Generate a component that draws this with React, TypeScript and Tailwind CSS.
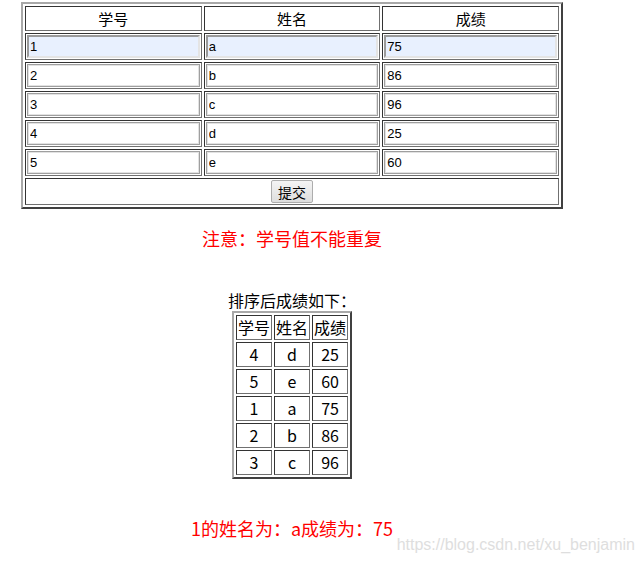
import React from "react";

const rows = [
  ["1", "a", "75"],
  ["2", "b", "86"],
  ["3", "c", "96"],
  ["4", "d", "25"],
  ["5", "e", "60"],
];

const sorted = [
  ["4", "d", "25"],
  ["5", "e", "60"],
  ["1", "a", "75"],
  ["2", "b", "86"],
  ["3", "c", "96"],
];

const cellCls =
  "border border-t-[#333333] border-l-[#333333] border-b-[#707070] border-r-[#707070] p-[1px] align-middle";

export default function App() {
  return (
    <div className="relative w-[644px] h-[564px] bg-white overflow-hidden font-['Noto_Sans_CJK_SC',sans-serif] text-black">
      <div className="ml-[21px] mt-[2px] w-[542px] flex flex-col items-center">
        <table className="table-fixed w-[542px] border-separate border-spacing-[2px] border-2 border-t-[#a8a8a8] border-l-[#a8a8a8] border-b-[#404040] border-r-[#404040]">
          <tbody>
            <tr>
              {["学号", "姓名", "成绩"].map((h) => (
                <td key={h} className={cellCls}>
                  <div className="h-[21px] flex items-center justify-center text-[15px] leading-none">
                    {h}
                  </div>
                </td>
              ))}
            </tr>
            {rows.map((r, i) => (
              <tr key={i}>
                {r.map((v, j) => (
                  <td key={j} className={cellCls}>
                    {i === 0 ? (
                      <input
                        readOnly
                        value={v}
                        className="block w-full h-[23px] bg-[#e8f0fe] border-2 border-t-[#9a9a9a] border-l-[#9a9a9a] border-b-[#e4e4e4] border-r-[#e4e4e4] px-[1px] text-[13px] font-['Liberation_Sans',Arial,sans-serif] text-black outline-none"
                      />
                    ) : (
                      <input
                        readOnly
                        value={v}
                        className="block w-full h-[23px] bg-white border border-[#9f9f9f] shadow-[inset_0_0_0_1px_#e2e2e2] px-[2px] text-[13px] font-['Liberation_Sans',Arial,sans-serif] text-black outline-none"
                      />
                    )}
                  </td>
                ))}
              </tr>
            ))}
            <tr>
              <td colSpan={3} className={cellCls}>
                <div className="h-[23px] flex items-center justify-center">
                  <button className="h-[23px] px-[6px] border border-[#adadad] rounded-[2px] bg-gradient-to-b from-[#f4f4f4] to-[#dedede] text-[14px] leading-none text-black">
                    提交
                  </button>
                </div>
              </td>
            </tr>
          </tbody>
        </table>

        <div className="mt-[17px] h-[24px] leading-[24px] text-[18px] text-[#ff0000]">
          注意：学号值不能重复
        </div>

        <div className="mt-[39px] h-[22px] leading-[22px] text-[16px]">
          排序后成绩如下：
        </div>

        <table className="border-separate border-spacing-[2px] border-2 border-t-[#a8a8a8] border-l-[#a8a8a8] border-b-[#404040] border-r-[#404040]">
          <tbody>
            <tr>
              {["学号", "姓名", "成绩"].map((h) => (
                <td key={h} className={cellCls + " text-center"}>
                  <div className="h-[21px] leading-[21px] text-[16px]">{h}</div>
                </td>
              ))}
            </tr>
            {sorted.map((r, i) => (
              <tr key={i}>
                {r.map((v, j) => (
                  <td key={j} className={cellCls + " text-center"}>
                    <div className="h-[21px] leading-[21px] text-[16px]">{v}</div>
                  </td>
                ))}
              </tr>
            ))}
          </tbody>
        </table>

        <div className="mt-[37px] h-[24px] leading-[24px] text-[18px] text-[#ff0000]">
          1的姓名为：a成绩为：75
        </div>
      </div>

      <div className="absolute right-[9px] top-[535px] text-[16px] leading-[19px] text-[#dedede] font-['Liberation_Sans',Arial,sans-serif]">
        https://blog.csdn.net/xu_benjamin
      </div>
    </div>
  );
}
